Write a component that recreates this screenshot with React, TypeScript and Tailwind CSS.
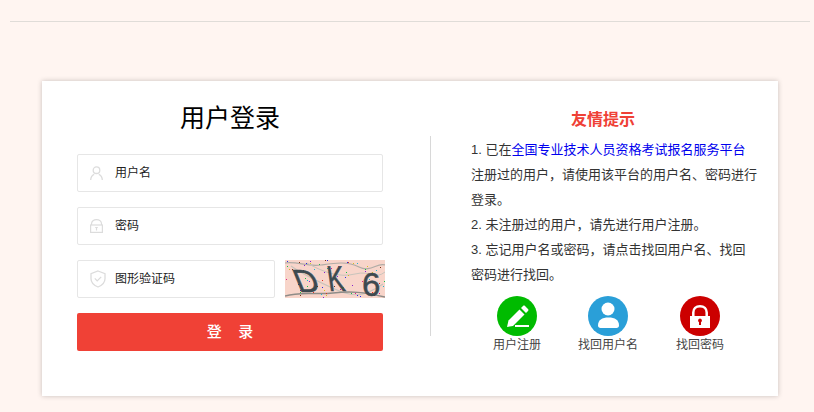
import type { ReactNode } from "react";

const FONT = "font-['Liberation_Sans','Noto_Sans_CJK_SC',sans-serif]";

const dots: [number, number, string][] = [];
const palette = ["#e0218a", "#2a2ae0", "#18c048", "#d8c020", "#e03020", "#20b8d0", "#8a20d0", "#7a3010"];
let seed = 17;
for (let i = 0; i < 80; i++) {
  seed = (seed * 137 + 59) % 1009;
  const x = seed % 100;
  seed = (seed * 137 + 59) % 1009;
  const y = seed % 38;
  dots.push([x, y, palette[i % palette.length]]);
}

function Captcha() {
  return (
    <svg width="100" height="38" viewBox="0 0 100 38" className="-mr-[2px] block shrink-0 bg-[#f8d5ca]">
      <path d="M0 3C12 1 22 7 36 5S62 1 74 7 92 2 100 5" fill="none" stroke="#b0aca6" strokeWidth="1.2" />
      <path d="M6 6C20 16 34 22 52 30S80 36 98 24" fill="none" stroke="#c8c4bc" strokeWidth="1.200" />
      <path d="M22 3C38 12 54 18 70 14S90 20 100 12" fill="none" stroke="#c8c4bc" strokeWidth="1" />
      <path d="M0 36C16 31 30 35 48 33S78 32 100 37" fill="none" stroke="#8e8c88" strokeWidth="1.500" />
      {dots.map(([x, y, c], i) => (
        <rect key={i} x={x} y={y} width="1" height="1" fill={c} />
      ))}
      <g fill="#3d4a50" stroke="#3d4a50" strokeWidth=".5" fontFamily="'Liberation Sans',sans-serif">
        <text transform="translate(14 32) skewX(22)" fontSize="32">D</text>
        <text transform="translate(44 31) skewX(8) scale(.72 1)" fontSize="36">K</text>
        <text transform="translate(77 36)" fontSize="33">6</text>
      </g>
    </svg>
  );
}

function UserIcon() {
  return (
    <svg width="13" height="14" viewBox="0 0 13 14" fill="none" stroke="#dcdcdc" strokeWidth="1.3">
      <circle cx="6.500" cy="4.200" r="3.300" />
      <path d="M.7 14c0-3.200 1.900-5 3.500-5.700M12.300 14c0-3.200-1.900-5-3.500-5.700" />
    </svg>
  );
}

function LockIcon() {
  return (
    <svg width="13" height="14" viewBox="0 0 13 14" fill="none" stroke="#dcdcdc" strokeWidth="1.200">
      <path d="M1.500 6V4.800a5 4.200 0 0 1 10 0V6" />
      <rect x=".6" y="6" width="11.800" height="7.400" />
      <path d="M6.500 8.500v3M5.200 8.500h2.600" />
    </svg>
  );
}

function ShieldIcon() {
  return (
    <svg width="16" height="18" viewBox="0 0 16 18" fill="none" stroke="#dcdcdc" strokeWidth="1.300">
      <path d="M8 1l7 2.600v5.200c0 4-3 6.600-7 8.200-4-1.600-7-4.200-7-8.200V3.600z" />
      <path d="M4.800 8.400l2.400 2.500 4-4" />
    </svg>
  );
}

function Field({ icon, label, className }: { icon: ReactNode; label: string; className: string }) {
  return (
    <div className={`flex h-[38px] items-center rounded-[2px] border border-[#e6e6e6] bg-white pl-[12px] ${className}`}>
      <span className="flex w-[25px] justify-start">{icon}</span>
      <span className="pb-[1px] text-[12px] leading-none text-[#222]">{label}</span>
    </div>
  );
}

function Shortcut({ bg, label, className, children }: { bg: string; label: string; className?: string; children: ReactNode }) {
  return (
    <div className={`flex w-[90px] flex-col items-center ${className ?? ""}`}>
      <div className={`h-[40px] w-[40px] rounded-full ${bg}`}>{children}</div>
      <span className="text-[12px] leading-[18px] text-[#444]">{label}</span>
    </div>
  );
}

export default function App() {
  return (
    <div className={`h-[412px] w-[814px] overflow-hidden bg-[#fff5f1] pt-[21px] ${FONT}`}>
      <div className="ml-[10px] mr-[4px] h-px bg-[#e0dcd8]" />
      <div className="ml-[42px] mt-[59px] flex h-[315px] w-[736px] bg-white shadow-[0_0_5px_rgba(0,0,0,0.22)]">
        <div className="ml-[35px] w-[306px] shrink-0">
          <h1 className="mt-[19px] text-center text-[25px] font-normal leading-[37px] text-black">用户登录</h1>
          <Field icon={<UserIcon />} label="用户名" className="mt-[17px]" />
          <Field icon={<LockIcon />} label="密码" className="mt-[15px]" />
          <div className="mt-[15px] flex items-center justify-between">
            <Field icon={<ShieldIcon />} label="图形验证码" className="w-[198px]" />
            <Captcha />
          </div>
          <button className="mt-[15px] flex h-[38px] w-full items-center justify-center rounded-[2px] bg-[#f04136] text-[15px] font-medium text-white">
            登&nbsp;&nbsp;&nbsp;&nbsp;录
          </button>
        </div>
        <div className="ml-[47px] mt-[55px] h-[200px] w-px shrink-0 bg-[#d8d8d8]" />
        <div className="ml-[40px] w-[287px] shrink-0">
          <h2 className="mt-[27px] w-[264px] text-center text-[16px] font-bold leading-[24px] text-[#ef4136]">友情提示</h2>
          <div className="mt-[5px] text-[13px] leading-[25px] text-[#333]">
            <p>
              1. 已在<span className="text-[#0000ee]">全国专业技术人员资格考试报名服务平台</span>
            </p>
            <p>注册过的用户，请使用该平台的用户名、密码进行登录。</p>
            <p>2. 未注册过的用户，请先进行用户注册。</p>
            <p>3. 忘记用户名或密码，请点击找回用户名、找回密码进行找回。</p>
          </div>
          <div className="ml-[1px] mt-[9px] flex gap-[1px]">
            <Shortcut bg="bg-[#00bb00]" label="用户注册">
              <svg width="40" height="40" viewBox="0 0 40 40" fill="white">
                <path d="M10 31l1.500-6.500L22.500 13.500l5 5L16 30z" />
                <path d="M24 12l2-2c.6-.6 1.400-.6 2 0l3 3c.6.6.6 1.400 0 2l-2 2z" />
                <rect x="18" y="29" width="14" height="2" />
              </svg>
            </Shortcut>
            <Shortcut bg="bg-[#2a9fd8]" label="找回用户名">
              <svg width="40" height="40" viewBox="0 0 40 40" fill="white">
                <circle cx="20" cy="13" r="6.500" />
                <path d="M10 29.500C10 24 14 21.500 20.500 21.500S31 24 31 29.500c0 1.500-1 2.500-2.500 2.500h-16C11 32 10 31 10 29.500z" />
              </svg>
            </Shortcut>
            <Shortcut bg="bg-[#cc0000]" label="找回密码" className="ml-[1px]">
              <svg width="40" height="40" viewBox="0 0 40 40" fill="white">
                <path d="M13.300 20v-3.500C13.300 12.500 16 10.200 20 10.200s6.700 2.300 6.700 6.300V20" fill="none" stroke="white" strokeWidth="2.500" />
                <path fillRule="evenodd" d="M10 20h20v12H10zM20 22.500a2 2 0 0 0-1 3.700V29h2v-2.800a2 2 0 0 0-1-3.700z" />
              </svg>
            </Shortcut>
          </div>
        </div>
      </div>
    </div>
  );
}
